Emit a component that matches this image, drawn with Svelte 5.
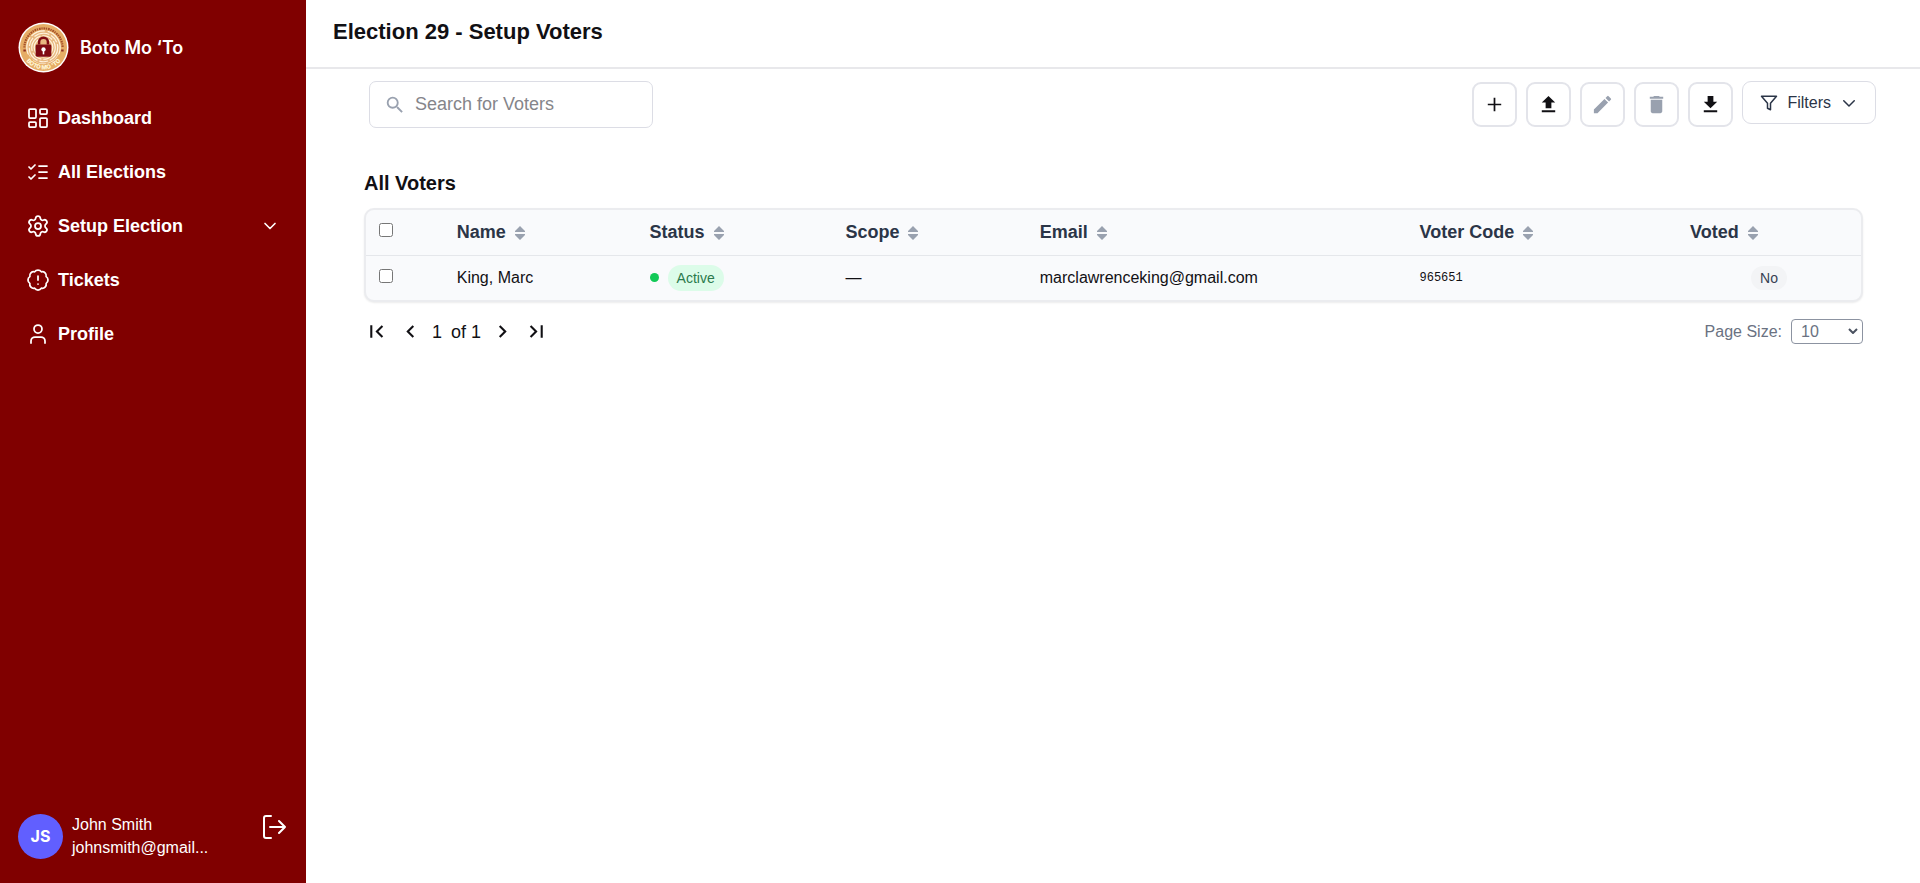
<script lang="ts">
  type Voter = {
    name: string;
    status: string;
    scope: string;
    email: string;
    code: string;
    voted: boolean;
  };

  const navItems = [
    { label: 'Dashboard', icon: 'dashboard' },
    { label: 'All Elections', icon: 'checklist' },
    { label: 'Setup Election', icon: 'gear', expandable: true },
    { label: 'Tickets', icon: 'badge' },
    { label: 'Profile', icon: 'user' }
  ];

  const actions = [
    { label: 'Add voter', icon: 'M19 12.900h-6.100V19h-1.800v-6.100H5v-1.800h6.100V5h1.800v6.100H19z' },
    { label: 'Import voters', icon: 'M9 16h6v-6h4l-7-7-7 7h4v6zm-4 2h14v2H5v-2z' },
    {
      label: 'Edit voter',
      disabled: true,
      icon: 'M3 17.25V21h3.75L17.81 9.94l-3.75-3.75L3 17.25zM20.71 7.04a1 1 0 0 0 0-1.41l-2.34-2.34a1 1 0 0 0-1.41 0l-1.83 1.83 3.75 3.75 1.83-1.83z'
    },
    {
      label: 'Delete voter',
      disabled: true,
      icon: 'M6 19c0 1.1.9 2 2 2h8c1.1 0 2-.9 2-2V7H6v12zM19 4h-3.5l-1-1h-5l-1 1H5v2h14V4z'
    },
    { label: 'Export voters', icon: 'M19 9h-4V3H9v6H5l7 7 7-7zM5 18v2h14v-2H5z' }
  ];

  const columns = ['Name', 'Status', 'Scope', 'Email', 'Voter Code', 'Voted'];

  const voters: Voter[] = [
    {
      name: 'King, Marc',
      status: 'Active',
      scope: '—',
      email: 'marclawrenceking@gmail.com',
      code: '965651',
      voted: false
    }
  ];

  let search = $state('');
  let pageSize = $state(10);
  let selected = $state(voters.map(() => false));

  let filtered = $derived(
    voters
      .map((voter, index) => ({ voter, index }))
      .filter(({ voter }) => voter.name.toLowerCase().includes(search.toLowerCase()))
  );

  function toggleAll(event: Event) {
    const checked = (event.currentTarget as HTMLInputElement).checked;
    selected = voters.map(() => checked);
  }
</script>

{#snippet navIcon(name: string)}
  <svg class="nav-icon" viewBox="0 0 24 24" aria-hidden="true">
    {#if name === 'dashboard'}
      <rect x="3" y="3" width="7" height="9" rx="1" />
      <rect x="14" y="3" width="7" height="5" rx="1" />
      <rect x="14" y="12" width="7" height="9" rx="1" />
      <rect x="3" y="16" width="7" height="5" rx="1" />
    {:else if name === 'checklist'}
      <path d="m3 17 2 2 4-4M3 7l2 2 4-4M13 6h8M13 12h8M13 18h8" />
    {:else if name === 'gear'}
      <path d="M9.671 4.136a2.34 2.34 0 0 1 4.659 0 2.34 2.34 0 0 0 3.319 1.915 2.34 2.34 0 0 1 2.33 4.033 2.34 2.34 0 0 0 0 3.831 2.34 2.34 0 0 1-2.33 4.033 2.34 2.34 0 0 0-3.319 1.915 2.34 2.34 0 0 1-4.659 0 2.34 2.34 0 0 0-3.32-1.915 2.34 2.34 0 0 1-2.33-4.033 2.34 2.34 0 0 0 0-3.831A2.34 2.34 0 0 1 6.35 6.051a2.34 2.34 0 0 0 3.319-1.915" />
      <circle cx="12" cy="12" r="3" />
    {:else if name === 'badge'}
      <path d="M3.85 8.62a4 4 0 0 1 4.78-4.77 4 4 0 0 1 6.74 0 4 4 0 0 1 4.78 4.78 4 4 0 0 1 0 6.74 4 4 0 0 1-4.77 4.78 4 4 0 0 1-6.75 0 4 4 0 0 1-4.78-4.77 4 4 0 0 1 0-6.76ZM12 8v4M12 16h.01" />
    {:else}
      <circle cx="12" cy="7" r="4" />
      <path d="M19 21v-2a4 4 0 0 0-4-4H9a4 4 0 0 0-4 4v2" />
    {/if}
  </svg>
{/snippet}

<div class="layout">
  <aside class="sidebar">
    <div class="brand">
      <svg class="logo" viewBox="0 0 52 52" aria-hidden="true">
        <circle cx="26" cy="26" r="25.5" fill="#fff" />
        <circle cx="26" cy="26" r="24" fill="#e6ad66" />
        <path d="M6.500 26a19.500 19.500 0 0 1 39 0" fill="none" stroke="#a4502a" stroke-width="2.200" stroke-dasharray="1.300 0.900 1.800 0.700" />
        <circle cx="26" cy="26" r="17.500" fill="#e8b981" />
        <g fill="none" stroke="#fff3df" stroke-width="1.200">
          <circle cx="26" cy="26" r="17" stroke-dasharray="22 2 15 3" />
          <circle cx="26" cy="26" r="14.500" stroke-dasharray="16 2 9 2" />
          <circle cx="26" cy="26" r="12" stroke-dasharray="19 2 11 2" />
          <circle cx="26" cy="26" r="9.500" />
        </g>
        <path d="M5.500 34.500l5-1.500a17 17 0 0 0 31 0l5 1.500a22.500 22.500 0 0 1-41 0z" fill="#e6ad66" />
        <path d="M5.500 29h2.500M44 29h2.500" stroke="#8d2d20" stroke-width="2" />
        <path id="logo-arc" d="M5 33.500A22.300 22.300 0 0 0 47 33.500" fill="none" />
        <text class="logo-text"><textPath href="#logo-arc" startOffset="50%" text-anchor="middle">BOTO MO 'TO</textPath></text>
        <rect x="18" y="23" width="16" height="12.500" rx="1.500" fill="#7f0a12" />
        <path d="M21.500 23v-2.500a4.500 4.500 0 0 1 9 0V23" fill="none" stroke="#7f0a12" stroke-width="2.500" />
        <circle cx="26" cy="28" r="2.200" fill="#fff" />
        <path d="M25.200 28h1.600v5h-1.600z" fill="#fff" />
      </svg>
      <span>Boto Mo ‘To</span>
    </div>

    <nav>
      {#each navItems as item}
        <a href="#{item.icon}">
          {@render navIcon(item.icon)}
          <span>{item.label}</span>
          {#if item.expandable}
            <svg class="nav-chevron" viewBox="0 0 24 24" aria-hidden="true"><path d="m6 9 6 6 6-6" /></svg>
          {/if}
        </a>
      {/each}
    </nav>

    <div class="account">
      <div class="avatar">JS</div>
      <div class="account-text">
        <span>John Smith</span>
        <span>johnsmith@gmail...</span>
      </div>
      <button class="logout" aria-label="Log out">
        <svg viewBox="0 0 24 24" aria-hidden="true">
          <path d="M9 1H4a2 2 0 0 0-2 2v18a2 2 0 0 0 2 2h5M8 12h15M17 6l6 6-6 6" />
        </svg>
      </button>
    </div>
  </aside>

  <main>
    <header>
      <h1>Election 29 - Setup Voters</h1>
    </header>

    <div class="toolbar">
      <label class="search">
        <svg viewBox="0 0 24 24" aria-hidden="true">
          <path d="M15.5 14h-.79l-.28-.27A6.471 6.471 0 0 0 16 9.5 6.5 6.5 0 1 0 9.5 16c1.61 0 3.09-.59 4.23-1.57l.27.28v.79l5 4.99L20.49 19l-4.99-5zm-6 0C7.01 14 5 11.99 5 9.5S7.01 5 9.5 5 14 7.01 14 9.5 11.99 14 9.5 14z" />
        </svg>
        <input type="text" placeholder="Search for Voters" aria-label="Search for Voters" bind:value={search} />
      </label>

      <div class="actions">
        {#each actions as action}
          <button class="btn-icon" aria-label={action.label} disabled={action.disabled}>
            <svg viewBox="0 0 24 24" aria-hidden="true"><path d={action.icon} /></svg>
          </button>
        {/each}
        <button class="btn-filters">
          <svg viewBox="0 0 24 24" aria-hidden="true"><path d="M22 3H2l8 9.46V19l4 2v-8.54z" /></svg>
          Filters
          <svg viewBox="0 0 24 24" aria-hidden="true"><path d="m5 9 7 7 7-7" /></svg>
        </button>
      </div>
    </div>

    <section class="voters">
      <h2>All Voters</h2>

      <div class="table-card">
        <table>
          <colgroup>
            <col class="col-check" />
            <col class="col-name" />
            <col class="col-status" />
            <col class="col-scope" />
            <col class="col-email" />
            <col class="col-code" />
            <col />
          </colgroup>
          <thead>
            <tr>
              <th><input type="checkbox" aria-label="Select all voters" onchange={toggleAll} /></th>
              {#each columns as column}
                <th>
                  <button class="sort">
                    {column}
                    <svg viewBox="0 0 10 14" aria-hidden="true"><path d="M5 0l5 5v1H0V5zM0 8h10v1l-5 5-5-5z" /></svg>
                  </button>
                </th>
              {/each}
            </tr>
          </thead>
          <tbody>
            {#each filtered as { voter, index }}
              <tr>
                <td><input type="checkbox" aria-label="Select {voter.name}" bind:checked={selected[index]} /></td>
                <td>{voter.name}</td>
                <td>
                  <div class="status">
                    <span class="dot"></span>
                    <span class="pill pill-active">{voter.status}</span>
                  </div>
                </td>
                <td>{voter.scope}</td>
                <td>{voter.email}</td>
                <td class="code">{voter.code}</td>
                <td class="voted"><span class="pill">{voter.voted ? 'Yes' : 'No'}</span></td>
              </tr>
            {/each}
          </tbody>
        </table>
      </div>

      <div class="table-footer">
        <div class="pager">
          <button aria-label="First page">
            <svg viewBox="0 0 24 24" aria-hidden="true"><path d="M18.41 16.59 13.82 12l4.59-4.59L17 6l-6 6 6 6zM6 6h2v12H6z" /></svg>
          </button>
          <button aria-label="Previous page">
            <svg viewBox="0 0 24 24" aria-hidden="true"><path d="M15.41 7.41 14 6l-6 6 6 6 1.41-1.41L10.83 12z" /></svg>
          </button>
          <span class="page-label"><span>1</span><span>of 1</span></span>
          <button aria-label="Next page">
            <svg viewBox="0 0 24 24" aria-hidden="true"><path d="M10 6 8.59 7.41 13.17 12l-4.58 4.59L10 18l6-6z" /></svg>
          </button>
          <button aria-label="Last page">
            <svg viewBox="0 0 24 24" aria-hidden="true"><path d="M5.59 7.41 10.18 12l-4.59 4.59L7 18l6-6-6-6zM16 6h2v12h-2z" /></svg>
          </button>
        </div>

        <label class="page-size">
          Page Size:
          <span class="select-wrap">
            <select bind:value={pageSize}>
              <option value={10}>10</option>
              <option value={25}>25</option>
              <option value={50}>50</option>
            </select>
            <svg viewBox="0 0 10 6" aria-hidden="true"><path d="m1 1 4 4 4-4" /></svg>
          </span>
        </label>
      </div>
    </section>
  </main>
</div>

<style>
  :global(body) {
    margin: 0;
    background: #fff;
  }

  .layout {
    display: flex;
    min-height: 100vh;
    font-family: 'Liberation Sans', Arial, sans-serif;
    font-size: 16px;
    line-height: 24px;
    color: #111014;
  }

  .layout,
  .layout * {
    box-sizing: border-box;
  }

  button {
    font: inherit;
    color: inherit;
    padding: 0;
    border: none;
    background: none;
    cursor: pointer;
  }

  svg {
    display: block;
    flex: none;
  }

  .sidebar {
    flex: none;
    display: flex;
    flex-direction: column;
    width: 306px;
    padding: 22px 18px 24px;
    background: #800000;
    color: #fff;
  }

  .brand {
    display: flex;
    align-items: center;
    gap: 11px;
    font-family: Inter, sans-serif;
    font-size: 18px;
    font-weight: 600;
  }

  .logo {
    width: 51px;
    height: 51px;
  }

  .logo-text {
    font: 800 6px Inter, sans-serif;
    fill: #fff8d8;
  }

  nav {
    display: flex;
    flex-direction: column;
    margin-top: 18px;
  }

  nav a {
    display: flex;
    align-items: center;
    gap: 8px;
    height: 54px;
    padding: 0 8px;
    color: #fff;
    font-size: 18px;
    font-weight: 700;
    text-decoration: none;
  }

  .nav-icon,
  .nav-chevron {
    fill: none;
    stroke: currentColor;
    stroke-width: 2;
    stroke-linecap: round;
    stroke-linejoin: round;
  }

  .nav-icon {
    width: 24px;
    height: 24px;
    stroke-width: 1.75;
  }

  .nav-chevron {
    width: 20px;
    height: 20px;
    margin-left: auto;
  }

  .account {
    display: flex;
    align-items: center;
    gap: 9px;
    margin-top: auto;
  }

  .avatar {
    display: grid;
    place-items: center;
    width: 45px;
    height: 45px;
    border-radius: 50%;
    background: #615fff;
    font-family: Inter, sans-serif;
    font-weight: 700;
  }

  .account-text {
    display: flex;
    flex-direction: column;
    line-height: 23px;
  }

  .logout {
    align-self: flex-start;
    margin-left: auto;
    padding: 2px 2px 0 0;
  }

  .logout svg {
    width: 24px;
    height: 24px;
    fill: none;
    stroke: currentColor;
    stroke-width: 2;
    stroke-linecap: round;
    stroke-linejoin: round;
  }

  main {
    flex: 1;
    min-width: 0;
  }

  header {
    height: 69px;
    padding: 17px 27px;
    border-bottom: 2px solid #e8e8eb;
  }

  h1 {
    margin: 0;
    font-size: 22px;
    line-height: 30px;
  }

  .toolbar {
    display: flex;
    align-items: flex-start;
    justify-content: space-between;
    padding: 12px 44px 0 63px;
  }

  .search {
    display: flex;
    align-items: center;
    gap: 9px;
    width: 284px;
    height: 47px;
    padding: 0 14px;
    border: 1px solid #dcdde5;
    border-radius: 7px;
  }

  .search svg {
    width: 22px;
    height: 22px;
    fill: #99a1af;
  }

  .search input {
    flex: 1;
    min-width: 0;
    padding: 0 0 2px;
    border: none;
    outline: none;
    background: none;
    font: inherit;
    font-size: 18px;
  }

  .search input::placeholder {
    color: #85858a;
  }

  .actions {
    display: flex;
    gap: 9px;
  }

  .btn-icon {
    display: grid;
    place-items: center;
    width: 45px;
    height: 45px;
    margin-top: 1px;
    border: 2px solid #e3e4ea;
    border-radius: 9px;
  }

  .btn-icon svg {
    width: 23px;
    height: 23px;
    fill: #111014;
  }

  .btn-icon:disabled svg {
    fill: #99a1af;
  }

  .btn-filters {
    display: flex;
    align-items: center;
    gap: 9px;
    height: 43px;
    padding: 0 17px;
    border: 1px solid #dcdde5;
    border-radius: 9px;
    color: #2b3547;
  }

  .btn-filters svg {
    width: 18px;
    height: 18px;
    fill: none;
    stroke: currentColor;
    stroke-width: 2;
    stroke-linecap: round;
    stroke-linejoin: round;
  }

  .voters {
    padding: 43px 57px 0 58px;
  }

  h2 {
    margin: 0;
    font-size: 20px;
    line-height: 24px;
  }

  .table-card {
    margin-top: 13px;
    overflow: hidden;
    border: 2px solid #ebecef;
    border-radius: 10px;
    background: #f9fafc;
    box-shadow: 0 1px 2px rgba(0, 0, 0, 0.08);
  }

  table {
    width: 100%;
    table-layout: fixed;
    border-collapse: collapse;
  }

  .col-check { width: 5.2%; }
  .col-name { width: 12.9%; }
  .col-status { width: 13.1%; }
  .col-scope { width: 13%; }
  .col-email { width: 25.4%; }
  .col-code { width: 18.1%; }

  th,
  td {
    height: 45px;
    padding: 0 13px;
    text-align: left;
  }

  th {
    border-bottom: 1px solid #e5e7eb;
  }

  input[type='checkbox'] {
    display: block;
    width: 14px;
    height: 14px;
    margin: 0 0 4px;
  }

  .sort {
    display: flex;
    align-items: center;
    gap: 9px;
    color: #2b3547;
    font-size: 18px;
    font-weight: 700;
  }

  .sort svg {
    width: 10px;
    height: 14px;
    margin-top: 2px;
    fill: #99a1af;
  }

  .status {
    display: flex;
    align-items: center;
    gap: 9px;
  }

  .dot {
    width: 9px;
    height: 9px;
    border-radius: 50%;
    background: #12c957;
  }

  .pill {
    display: inline-block;
    padding: 0 9px;
    border-radius: 14px;
    background: #f3f4f6;
    color: #364153;
    font-size: 14px;
  }

  .pill-active {
    padding: 1px 9px;
    background: #dcfce9;
    color: #2b7a4c;
  }

  .code {
    font-family: 'Liberation Mono', monospace;
    font-size: 12px;
  }

  .voted {
    text-align: center;
  }

  .table-footer {
    display: flex;
    align-items: center;
    justify-content: space-between;
    margin-top: 17px;
  }

  .pager {
    display: flex;
    align-items: center;
    gap: 9px;
    font-size: 18px;
  }

  .pager svg {
    width: 25px;
    height: 25px;
    fill: #111014;
  }

  .page-label {
    display: flex;
    gap: 9px;
  }

  .page-size {
    display: flex;
    align-items: center;
    gap: 9px;
    color: #6a7282;
  }

  .select-wrap {
    position: relative;
  }

  select {
    display: block;
    appearance: none;
    width: 72px;
    height: 25px;
    padding: 0 9px;
    border: 1px solid #8c93a1;
    border-radius: 4px;
    background: #fff;
    color: #6a7282;
    font: inherit;
  }

  /* chevron sits over the native select */
  .select-wrap svg {
    position: absolute;
    top: 9px;
    right: 5px;
    width: 10px;
    height: 6px;
    fill: none;
    stroke: #4a5260;
    stroke-width: 2;
    pointer-events: none;
  }
</style>
